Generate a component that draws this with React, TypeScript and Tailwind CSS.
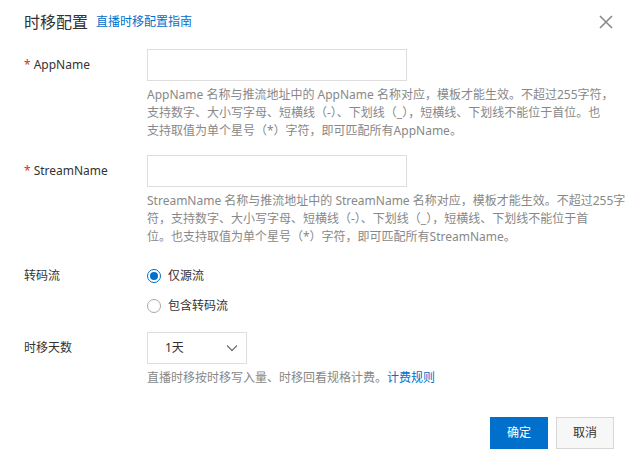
import { useState } from 'react';

const FONT = '"Noto Sans", "Noto Sans CJK SC", sans-serif';

function Label({ text, required }: { text: string; required?: boolean }) {
  return (
    <div className="w-[147px] shrink-0 pl-6 h-8 flex items-center text-[12px] text-[#333]">
      {required && <span className="text-[#d93026] mr-[3px]">*</span>}
      {text}
    </div>
  );
}

function Help({ lines }: { lines: React.ReactNode[] }) {
  return (
    <div className="mt-[5px] text-[12px] leading-[18px] text-[#888]">
      {lines.map((l, i) => (
        <div key={i} className="whitespace-nowrap">
          {l}
        </div>
      ))}
    </div>
  );
}

function Radio({ checked, label, onClick }: { checked: boolean; label: string; onClick: () => void }) {
  return (
    <button type="button" onClick={onClick} className="h-[30px] flex items-center gap-[7px] text-[12px] text-[#333]">
      <span
        className={`w-[14px] h-[14px] rounded-full border flex items-center justify-center ${
          checked ? 'border-[#0070cc]' : 'border-[#a9a9a9]'
        }`}
      >
        {checked && <span className="w-[8px] h-[8px] rounded-full bg-[#0070cc]" />}
      </span>
      {label}
    </button>
  );
}

export default function App() {
  const [mode, setMode] = useState<'source' | 'all'>('source');

  return (
    <div className="relative w-[638px] h-[454px] bg-white overflow-hidden" style={{ fontFamily: FONT }}>
      <div className="flex items-center gap-2 px-6 pt-3 h-8">
        <span className="text-[16px] leading-5 text-[#333]">时移配置</span>
        <a className="text-[12px] text-[#0070cc] cursor-pointer">直播时移配置指南</a>
      </div>
      <button type="button" className="absolute top-[15px] right-[25px] text-[#888]">
        <svg width="14" height="14" viewBox="0 0 14 14" fill="none" stroke="currentColor" strokeWidth="1.6">
          <path d="M1 1L13 13M13 1L1 13" />
        </svg>
      </button>

      <div className="mt-[17px] flex">
        <Label text="AppName" required />
        <div className="w-[465px]">
          <input className="w-[260px] h-8 border border-[#dedede] outline-none px-3 text-[12px]" />
          <Help
            lines={[
              'AppName 名称与推流地址中的 AppName 名称对应，模板才能生效。不超过255字符，',
              '支持数字、大小写字母、短横线（-）、下划线（_），短横线、下划线不能位于首位。也',
              '支持取值为单个星号（*）字符，即可匹配所有AppName。',
            ]}
          />
        </div>
      </div>

      <div className="mt-[15px] flex">
        <Label text="StreamName" required />
        <div className="w-[465px]">
          <input className="w-[260px] h-8 border border-[#dedede] outline-none px-3 text-[12px]" />
          <Help
            lines={[
              'StreamName 名称与推流地址中的 StreamName 名称对应，模板才能生效。不超过255字',
              '符，支持数字、大小写字母、短横线（-）、下划线（_），短横线、下划线不能位于首',
              '位。也支持取值为单个星号（*）字符，即可匹配所有StreamName。',
            ]}
          />
        </div>
      </div>

      <div className="mt-[15px] flex">
        <div className="w-[147px] shrink-0 pl-6 h-[30px] flex items-center text-[12px] text-[#333]">转码流</div>
        <div className="flex flex-col items-start">
          <Radio checked={mode === 'source'} label="仅源流" onClick={() => setMode('source')} />
          <Radio checked={mode === 'all'} label="包含转码流" onClick={() => setMode('all')} />
        </div>
      </div>

      <div className="mt-[11px] flex">
        <Label text="时移天数" />
        <div className="w-[465px]">
          <div className="w-[100px] h-8 border border-[#dedede] flex items-center justify-between pl-[17px] pr-[8px] text-[12px] text-[#333]">
            <span>1天</span>
            <svg width="12" height="8" viewBox="0 0 12 8" fill="none" stroke="#777" strokeWidth="1.3">
              <path d="M1 1.5L6 6.5L11 1.5" />
            </svg>
          </div>
          <Help
            lines={[
              <>
                直播时移按时移写入量、时移回看规格计费。
                <a className="text-[#0070cc] cursor-pointer">计费规则</a>
              </>,
            ]}
          />
        </div>
      </div>

      <div className="mt-[30px] flex justify-end gap-2 pr-6">
        <button type="button" className="w-[58px] h-8 bg-[#0070cc] text-white text-[12px]">确定</button>
        <button type="button" className="w-[58px] h-8 bg-[#f7f7f7] border border-[#d7d7d7] text-[#333] text-[12px]">取消</button>
      </div>
    </div>
  );
}
